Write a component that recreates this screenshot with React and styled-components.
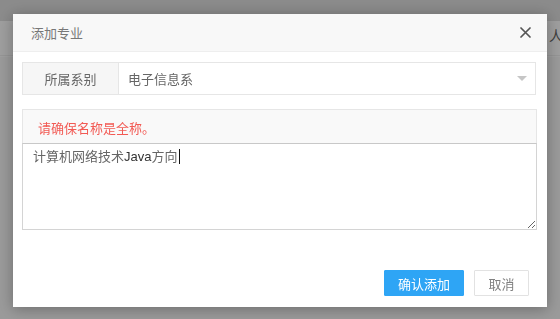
import React from "react";
import styled, { createGlobalStyle } from "styled-components";

const FONT = `"Liberation Sans", "Noto Sans CJK SC", sans-serif`;

const Global = createGlobalStyle`
  html, body { margin: 0; padding: 0; }
  body { font-family: ${FONT}; font-size: 13px; background: #fff; }
  * { box-sizing: border-box; }
`;

const Page = styled.div`
  width: 560px;
  height: 319px;
  display: flex;
  flex-direction: column;
  background: #ffffff;
  overflow: hidden;
`;

const TopBar = styled.div`
  height: 21px;
  background: #e0e0e0;
`;

const NavRow = styled.div`
  height: 35px;
  display: flex;
  align-items: center;
  justify-content: flex-end;
  padding-bottom: 6px;
  border-bottom: 1px solid #f0f0f0;
  color: #666;
  font-size: 14px;
  margin-right: -17px;
  background: #ffffff;
`;

const Content = styled.div`
  flex: 1;
  background: #f8f8f8;
  border-top: 1px solid #fff;
`;

const Overlay = styled.div`
  position: fixed;
  inset: 0;
  background: rgba(0, 0, 0, 0.38);
  display: flex;
  align-items: flex-start;
  padding: 14px 0 0 13px;
`;

const Modal = styled.div`
  width: 534px;
  background: #fff;
  box-shadow: 0 2px 14px rgba(0, 0, 0, 0.3);
  display: flex;
  flex-direction: column;
`;

const Header = styled.div`
  height: 38px;
  background: #f8f8f8;
  border-bottom: 1px solid #eeeeee;
  display: flex;
  align-items: center;
  justify-content: space-between;
  padding: 0 16px 0 18px;
`;

const Title = styled.div`
  color: #777;
  font-size: 13px;
`;

const Close = styled.button`
  border: 0;
  background: transparent;
  padding: 0;
  width: 12px;
  height: 12px;
  display: flex;
  align-items: center;
  justify-content: center;
  cursor: pointer;
`;

const Body = styled.div`
  padding: 10px 11px 0 9px;
  display: flex;
  flex-direction: column;
`;

const InputGroup = styled.div`
  height: 33px;
  display: flex;
  border: 1px solid #e6e6e6;
  margin-bottom: 14px;
`;

const Addon = styled.div`
  width: 96px;
  background: #f6f6f6;
  border-right: 1px solid #e6e6e6;
  color: #666;
  display: flex;
  align-items: center;
  justify-content: center;
`;

const Select = styled.div`
  flex: 1;
  display: flex;
  align-items: center;
  justify-content: space-between;
  padding: 0 8px 0 9px;
  color: #666;
`;

const Arrow = styled.span`
  width: 0;
  height: 0;
  border-left: 5px solid transparent;
  border-right: 5px solid transparent;
  border-top: 5px solid #c6c6c6;
`;

const Notice = styled.div`
  height: 34px;
  margin-right: -1px;
  background: #f9f9f9;
  border: 1px solid #e6e6e6;
  border-bottom: 0;
  color: #f25a54;
  display: flex;
  align-items: center;
  padding-left: 15px;
  padding-top: 2px;
`;

const TextBox = styled.div`
  height: 87px;
  margin-right: -1px;
  border: 1px solid #d4d4d4;
  border-top-color: #c8c8c8;
  padding: 3px 10px;
  line-height: 20px;
  color: #666;
  resize: both;
  overflow: auto;
`;

const Latin = styled.span`
  color: #333;
`;

const Caret = styled.span`
  display: inline-block;
  width: 1px;
  height: 15px;
  background: #111;
  vertical-align: -3px;
  margin-left: 1px;
`;

const Footer = styled.div`
  display: flex;
  justify-content: flex-end;
  gap: 10px;
  padding: 40px 18px 11px 0;
`;

const Button = styled.button`
  height: 26px;
  padding: 0;
  width: ${(p) => (p.$primary ? "80px" : "55px")};
  font-family: ${FONT};
  font-size: 13px;
  border: 1px solid ${(p) => (p.$primary ? "#2ea5f5" : "#e2e2e2")};
  background: ${(p) => (p.$primary ? "#2ea5f5" : "#fff")};
  color: ${(p) => (p.$primary ? "#fff" : "#808080")};
  border-radius: 1px;
  cursor: pointer;
`;

export default function App() {
  return (
    <>
      <Global />
      <Page>
        <TopBar />
        <NavRow>人员</NavRow>
        <Content />
      </Page>
      <Overlay>
        <Modal>
          <Header>
            <Title>添加专业</Title>
            <Close aria-label="关闭">
              <svg width="11" height="11" viewBox="0 0 11 11">
                <path d="M1 1L10 10M10 1L1 10" stroke="#555" strokeWidth="1.7" strokeLinecap="round" />
              </svg>
            </Close>
          </Header>
          <Body>
            <InputGroup>
              <Addon>所属系别</Addon>
              <Select>
                <span>电子信息系</span>
                <Arrow />
              </Select>
            </InputGroup>
            <Notice>请确保名称是全称。</Notice>
            <TextBox>
              计算机网络技术<Latin>Java</Latin>方向
              <Caret />
            </TextBox>
          </Body>
          <Footer>
            <Button $primary>确认添加</Button>
            <Button>取消</Button>
          </Footer>
        </Modal>
      </Overlay>
    </>
  );
}
